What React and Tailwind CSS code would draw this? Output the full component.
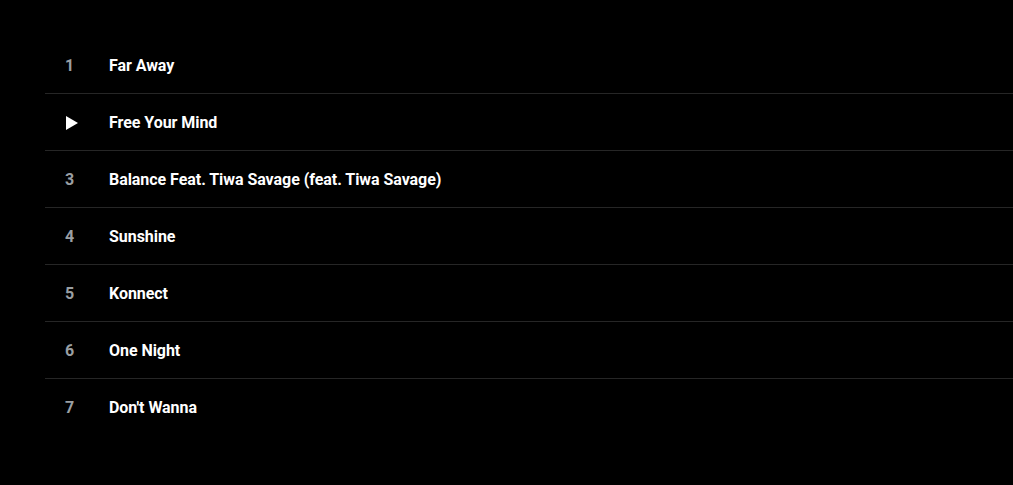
const TRACKS = [
  "Far Away",
  "Free Your Mind",
  "Balance Feat. Tiwa Savage (feat. Tiwa Savage)",
  "Sunshine",
  "Konnect",
  "One Night",
  "Don't Wanna",
];

export default function App() {
  return (
    <div className="min-h-[485px] w-full bg-black pl-[45px] pt-[37px]" style={{ fontFamily: "Roboto, 'Noto Sans', sans-serif" }}>
      {TRACKS.map((t, i) => (
        <div key={i} className={`flex h-[57px] items-center pt-px ${i < TRACKS.length - 1 ? "border-b border-[#262626]" : ""}`}>
          <div className="w-[64px] pl-[20px]">
            {i === 1 ? (
              <svg width="12" height="14" viewBox="0 0 12 14" className="ml-px">
                <path d="M0 0 L12 7 L0 14 Z" fill="#fff" />
              </svg>
            ) : (
              <span className="text-[16px] font-bold text-[#9a9fa3]">{i + 1}</span>
            )}
          </div>
          <span className="text-[16px] font-bold tracking-[-0.05px] text-white">{t}</span>
        </div>
      ))}
    </div>
  );
}
